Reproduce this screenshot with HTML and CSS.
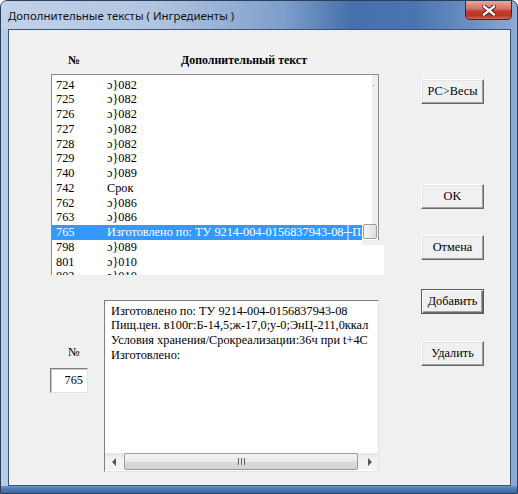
FILE: index.html
```html
<!DOCTYPE html>
<html lang="ru">
<head>
<meta charset="utf-8">
<title>Дополнительные тексты</title>
<link rel="stylesheet" href="styles.css">
</head>
<body>
<div class="window">
  <div class="titlebar">
    <span class="title">Дополнительные тексты ( Ингредиенты )</span>
    <div class="close">
      <svg width="14" height="11" viewBox="0 0 14 11">
        <path d="M2 1.5 L12 9.5 M12 1.5 L2 9.5" stroke="#3a1a14" stroke-width="4.2" stroke-linecap="square"/>
        <path d="M2 1.5 L12 9.5 M12 1.5 L2 9.5" stroke="#ffffff" stroke-width="2.4" stroke-linecap="square"/>
      </svg>
    </div>
  </div>
  <div class="client">
    <div class="main">
      <div class="headers">
        <span class="h-num">№</span>
        <span class="h-text">Дополнительный текст</span>
      </div>
      <div class="list">
        <div class="list-upper">
          <div class="rows">
            <div class="row"><span class="num">724</span><span class="txt">ɔ}082</span></div>
            <div class="row"><span class="num">725</span><span class="txt">ɔ}082</span></div>
            <div class="row"><span class="num">726</span><span class="txt">ɔ}082</span></div>
            <div class="row"><span class="num">727</span><span class="txt">ɔ}082</span></div>
            <div class="row"><span class="num">728</span><span class="txt">ɔ}082</span></div>
            <div class="row"><span class="num">729</span><span class="txt">ɔ}082</span></div>
            <div class="row"><span class="num">740</span><span class="txt">ɔ}089</span></div>
            <div class="row"><span class="num">742</span><span class="txt">Срок</span></div>
            <div class="row"><span class="num">762</span><span class="txt">ɔ}086</span></div>
            <div class="row"><span class="num">763</span><span class="txt">ɔ}086</span></div>
            <div class="row sel"><span class="num">765</span><span class="txt">Изготовлено по: ТУ 9214-004-0156837943-08┼П</span></div>
          </div>
          <div class="side">
            <div class="track"><span class="dot"></span></div>
            <div class="thumb"></div>
          </div>
        </div>
        <div class="list-lower">
          <div class="row"><span class="num">798</span><span class="txt">ɔ}089</span></div>
          <div class="row"><span class="num">801</span><span class="txt">ɔ}010</span></div>
          <div class="row"><span class="num">802</span><span class="txt">ɔ}010</span></div>
        </div>
      </div>
      <div class="bottom">
        <div class="numcol">
          <span class="lbl">№</span>
          <div class="numbox">765</div>
        </div>
        <div class="memo">
          <div class="memo-text">
            <div class="line">Изготовлено по: ТУ 9214-004-0156837943-08</div>
            <div class="line">Пищ.цен. в100г:Б-14,5;ж-17,0;у-0;ЭнЦ-211,0ккал</div>
            <div class="line">Условия хранения/Срокреализации:36ч при t+4С</div>
            <div class="line">Изготовлено:</div>
          </div>
          <div class="hscroll">
            <div class="arrow"><span class="tri-left"></span></div>
            <div class="hthumb"><span class="grip"></span></div>
            <div class="arrow"><span class="tri-right"></span></div>
          </div>
        </div>
      </div>
    </div>
    <div class="buttons">
      <div class="btn b-pc">РС&gt;Весы</div>
      <div class="btn b-ok">OK</div>
      <div class="btn b-cancel">Отмена</div>
      <div class="btn default b-add">Добавить</div>
      <div class="btn b-del">Удалить</div>
    </div>
  </div>
</div>
</body>
</html>
```
FILE: styles.css
```css
html, body {
  margin: 0;
  padding: 0;
  width: 518px;
  height: 494px;
  overflow: hidden;
  background: #ffffff;
}

.window {
  box-sizing: border-box;
  width: 518px;
  height: 494px;
  display: flex;
  flex-direction: column;
  border: 1px solid #2b3f5c;
  border-radius: 7px 7px 0 0;
  background:
    linear-gradient(to bottom, transparent calc(100% - 7px), #6f95c9 calc(100% - 7px), #4d78b4 calc(100% - 4px), #3f679f 100%),
    linear-gradient(to right, #b7cbe4 0%, #a9c0de 30%, #7c9dca 55%, #4670ab 68%, #4a74b0 80%, #6e92c4 92%, #8eabd3 100%);
}

.titlebar {
  height: 28px;
  display: flex;
  align-items: center;
  padding-left: 7px;
  background: linear-gradient(to right, rgba(255,255,255,0.15), rgba(255,255,255,0) 60%);
}

.title {
  font-family: "Noto Sans", "Open Sans", sans-serif;
  font-size: 11.4px;
  color: #111;
  white-space: nowrap;
  margin-top: 1px;
}

.close {
  margin-left: auto;
  margin-right: 5px;
  align-self: flex-start;
  width: 45px;
  height: 18px;
  border: 1px solid #5a1f18;
  border-top: none;
  border-radius: 0 0 5px 5px;
  background: linear-gradient(to bottom, #e9a99c 0%, #d36f5f 45%, #c1402f 55%, #b63624 80%, #d06a52 100%);
  display: flex;
  align-items: center;
  justify-content: center;
}

.client {
  flex: 1;
  margin: 0 6px 7px 7px;
  border: 1px solid #3b5478;
  background: #f0f0f0;
  display: flex;
  font-family: "Liberation Serif", "Times New Roman", serif;
  font-size: 12.3px;
  color: #000;
}

.main {
  width: 334px;
  padding-left: 41px;
  display: flex;
  flex-direction: column;
}

.headers {
  margin-top: 23px;
  height: 14px;
  line-height: 14px;
  display: grid;
  grid-template-columns: 50px 1fr;
  font-weight: bold;
  font-size: 11.9px;
}

.h-num {
  padding-left: 18px;
}

.h-text {
  text-align: center;
  padding-left: 4px;
  padding-right: 0;
}

.list {
  margin-top: 7px;
  margin-left: 1px;
  display: flex;
  flex-direction: column;
}

.list-upper {
  box-sizing: border-box;
  width: 328px;
  border: 1px solid #8a8e94;
  border-bottom: none;
  background: #ffffff;
  display: flex;
}

.rows {
  width: 311px;
  padding-top: 2.5px;
}

.row {
  height: 14.75px;
  line-height: 14.75px;
  display: flex;
  white-space: nowrap;
}

.num {
  width: 55px;
  padding-left: 4px;
  box-sizing: border-box;
  flex: none;
}

.txt {
  width: 30px;
  overflow: hidden;
  flex: none;
}

.row.sel {
  width: 310px;
  background: #3399ff;
  color: #ffffff;
}

.row.sel .txt {
  width: 255px;
}

.side {
  width: 15px;
  display: flex;
  flex-direction: column;
}

.track {
  flex: 1;
  position: relative;
  background: linear-gradient(to right, #ffffff 9px, #efefef 9px);
}

.dot {
  position: absolute;
  left: 10px;
  top: 10px;
  width: 1px;
  height: 1px;
  background: #999;
}

.thumb {
  box-sizing: border-box;
  width: 14px;
  height: 15px;
  margin: 0 0 1px 0;
  border: 1px solid #9a9a9a;
  border-radius: 2px;
  background: linear-gradient(to right, #f6f6f6, #dedede);
}

.list-lower {
  box-sizing: border-box;
  width: 333px;
  height: 35.5px;
  overflow: hidden;
  border-left: 1px solid #8a8e94;
  background:
    linear-gradient(#ffffff, #ffffff) 0 0 / 310px 100% no-repeat,
    linear-gradient(#ffffff, #ffffff) 0 5px / 100% 100% no-repeat;
}

.bottom {
  margin-top: 25px;
  display: flex;
}

.numcol {
  width: 54px;
  display: flex;
  flex-direction: column;
  align-items: flex-start;
}

.lbl {
  margin-top: 45px;
  margin-left: 18px;
  height: 14px;
  line-height: 14px;
}

.numbox {
  box-sizing: border-box;
  margin-top: 9px;
  width: 38px;
  height: 25px;
  border: 1px solid;
  border-color: #7f7f7f #e3e3e3 #e3e3e3 #7f7f7f;
  box-shadow: inset 1px 1px 0 #c8c8c8;
  background: #ffffff;
  text-align: right;
  padding-right: 4px;
  line-height: 23px;
}

.memo {
  box-sizing: border-box;
  width: 275px;
  height: 172px;
  border: 1px solid;
  border-color: #7f7f7f #e3e3e3 #e3e3e3 #7f7f7f;
  background: #ffffff;
  display: flex;
  flex-direction: column;
}

.memo-text {
  flex: 1;
  padding: 2.5px 0 0 6px;
  overflow: hidden;
}

.line {
  height: 14.6px;
  line-height: 14.6px;
  white-space: nowrap;
  overflow: hidden;
  width: 261px;
}

.hscroll {
  height: 17px;
  margin-bottom: 1px;
  display: flex;
  align-items: stretch;
  background: linear-gradient(to bottom, #e6e6e6, #f3f3f3 40%, #f3f3f3);
}

.arrow {
  width: 17px;
  display: flex;
  align-items: center;
  justify-content: center;
}

.tri-left {
  width: 0;
  height: 0;
  border-top: 4px solid transparent;
  border-bottom: 4px solid transparent;
  border-right: 4px solid #555;
}

.tri-right {
  width: 0;
  height: 0;
  border-top: 4px solid transparent;
  border-bottom: 4px solid transparent;
  border-left: 4px solid #555;
}

.hthumb {
  flex: 1;
  margin: 0 3px 0 2px;
  border: 1px solid #9a9a9a;
  border-radius: 2px;
  background: linear-gradient(to bottom, #f5f5f5 0%, #e8e8e8 50%, #d9d9d9 51%, #d4d4d4 100%);
  display: flex;
  align-items: center;
  justify-content: center;
}

.grip {
  width: 7px;
  height: 7px;
  background: repeating-linear-gradient(to right, #606060 0 1px, #e8e8e8 1px 3px);
}

.buttons {
  margin-left: 37px;
  padding-top: 49px;
  display: flex;
  flex-direction: column;
}

.btn {
  box-sizing: border-box;
  width: 63px;
  height: 25px;
  display: flex;
  align-items: center;
  justify-content: center;
  background: #f0f0f0;
  border: 1px solid;
  border-color: #ffffff #696969 #696969 #ffffff;
  box-shadow: inset -1px -1px 0 #a0a0a0, inset 1px 1px 0 #e3e3e3;
  white-space: nowrap;
}

.btn.default {
  border: 1px solid #5a5a5a;
  box-shadow: inset 1px 1px 0 #ffffff, inset -1px -1px 0 #696969, inset -2px -2px 0 #a0a0a0;
}

.b-ok { margin-top: 80px; }
.b-cancel { margin-top: 26px; }
.b-add { margin-top: 29px; }
.b-del { margin-top: 27px; }
```
